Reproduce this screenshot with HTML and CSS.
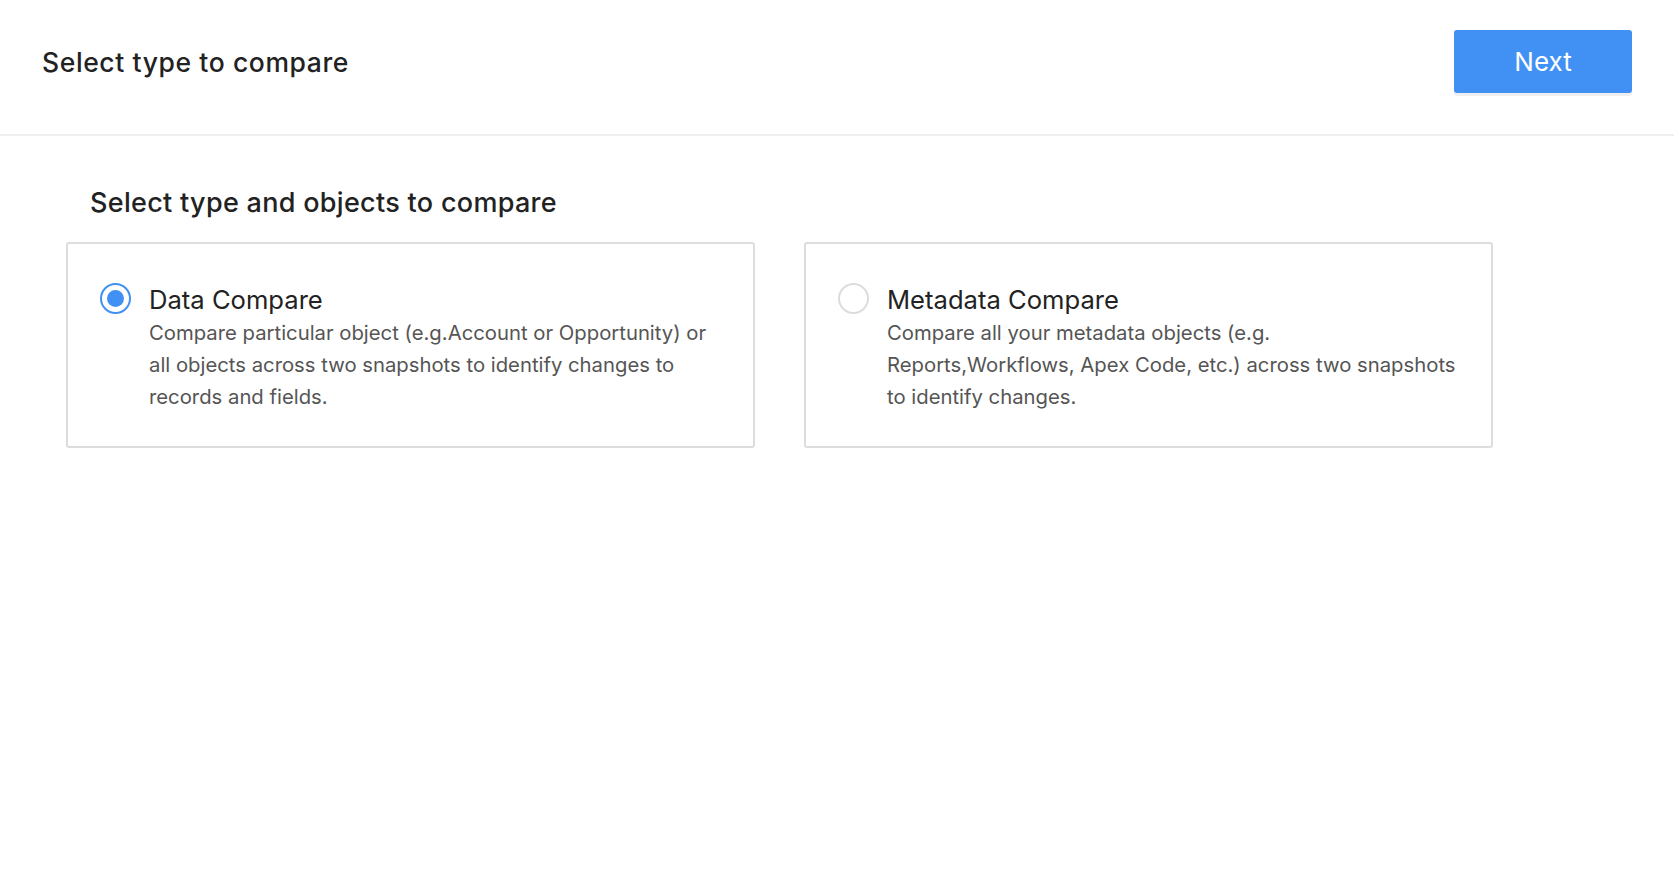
FILE: index.html
```html
<!DOCTYPE html>
<html lang="en">
<head>
<meta charset="utf-8">
<title>Select type to compare</title>
<link rel="stylesheet" href="styles.css">
</head>
<body>
<header class="topbar">
  <h1 class="topbar-title">Select type to compare</h1>
  <button class="btn-next" type="button">Next</button>
</header>
<main class="content">
  <h2 class="section-title">Select type and objects to compare</h2>
  <div class="options">
    <label class="option">
      <span class="radio radio-checked"><span class="radio-dot"></span></span>
      <span class="option-body">
        <span class="option-title">Data Compare</span>
        <span class="option-desc">Compare particular object (e.g.Account or Opportunity) or<br>all objects across two snapshots to identify changes to<br>records and fields.</span>
      </span>
    </label>
    <label class="option">
      <span class="radio"></span>
      <span class="option-body">
        <span class="option-title">Metadata Compare</span>
        <span class="option-desc">Compare all your metadata objects (e.g.<br>Reports,Workflows, Apex Code, etc.) across two snapshots<br>to identify changes.</span>
      </span>
    </label>
  </div>
</main>
</body>
</html>
```

FILE: styles.css
```css
* { box-sizing: border-box; }

html, body {
  margin: 0;
  padding: 0;
  background: #ffffff;
  font-family: "Inter", "Noto Sans", "Liberation Sans", sans-serif;
  color: #222222;
}

.topbar {
  height: 136px;
  display: flex;
  align-items: center;
  justify-content: space-between;
  padding: 0 42px 11px 42px;
  border-bottom: 2px solid #efefef;
}

.topbar-title {
  margin: 0;
  font-size: 26.5px;
  line-height: 32px;
  letter-spacing: 0.6px;
  font-weight: 500;
  color: #222222;
}

.btn-next {
  width: 178px;
  height: 63px;
  border: none;
  border-radius: 3px;
  background: #4191f5;
  color: #ffffff;
  font-family: inherit;
  font-size: 26px;
  font-weight: 400;
  box-shadow: 0 3px 0 #efefef;
  cursor: pointer;
}

.content {
  padding: 50px 66px 0 66px;
}

.section-title {
  margin: 0 0 22px 24px;
  font-size: 27px;
  line-height: 34px;
  letter-spacing: 0.3px;
  font-weight: 500;
  color: #222222;
}

.options {
  display: grid;
  grid-template-columns: 689px 689px;
  column-gap: 49px;
}

.option {
  display: flex;
  align-items: flex-start;
  gap: 18px;
  border: 2px solid #dddddd;
  border-radius: 3px;
  padding: 39px 16px 33px 32px;
  cursor: pointer;
}

.radio {
  flex: 0 0 auto;
  width: 31px;
  height: 31px;
  border-radius: 50%;
  border: 2px solid #dcdcdc;
  display: flex;
  align-items: center;
  justify-content: center;
}

.radio-checked {
  border-color: #4191f5;
}

.radio-dot {
  width: 17px;
  height: 17px;
  border-radius: 50%;
  background: #4191f5;
}

.option-body {
  display: flex;
  flex-direction: column;
  gap: 1px;
}

.option-title {
  margin-top: 1px;
  font-size: 25.6px;
  line-height: 32px;
  font-weight: 400;
  color: #222222;
}

.option-desc {
  font-size: 20.3px;
  line-height: 32px;
  color: #555555;
}
```
